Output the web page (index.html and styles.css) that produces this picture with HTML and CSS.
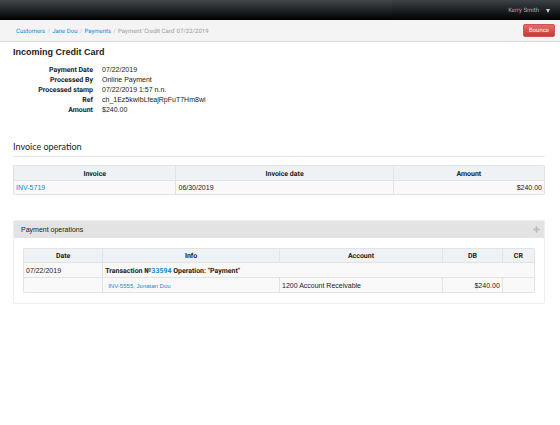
FILE: index.html
```html
<!DOCTYPE html>
<html lang="en">
<head>
  <meta charset="UTF-8">
  <title>Incoming Credit Card</title>
  <link rel="stylesheet" href="styles.css">
</head>
<body>

<header class="topbar">
  <button type="button" class="user-menu">Kerry Smith <span class="caret"></span></button>
</header>

<div class="subbar">
  <nav class="breadcrumb">
    <a href="#">Customers</a><span class="divider">/</span>
    <a href="#">Jane Dou</a><span class="divider">/</span>
    <a href="#">Payments</a><span class="divider">/</span>
    <span class="current">Payment 'Credit Card' 07/22/2019</span>
  </nav>
  <button type="button" class="btn-danger">Bounce</button>
</div>

<main class="content">
  <h1>Incoming Credit Card</h1>

  <dl class="details">
    <dt>Payment Date</dt><dd>07/22/2019</dd>
    <dt>Processed By</dt><dd>Online Payment</dd>
    <dt>Processed stamp</dt><dd>07/22/2019 1:57 n.n.</dd>
    <dt>Ref</dt><dd>ch_1Ez5kwIbLfeajRpFuT7Hm8wi</dd>
    <dt>Amount</dt><dd>$240.00</dd>
  </dl>

  <h2>Invoice operation</h2>

  <table class="table invoices">
    <colgroup>
      <col class="col-invoice"><col class="col-invoice-date"><col>
    </colgroup>
    <thead>
      <tr><th>Invoice</th><th>Invoice date</th><th>Amount</th></tr>
    </thead>
    <tbody>
      <tr><td><a href="#">INV-5719</a></td><td>06/30/2019</td><td class="money">$240.00</td></tr>
    </tbody>
  </table>

  <section class="panel">
    <div class="panel-head">
      <h3>Payment operations</h3>
      <button type="button" class="move" aria-label="Move">
        <svg width="7" height="7" viewBox="0 0 14 14">
          <path d="M7 0l3 3H8.500v2.500H11V4l3 3-3 3V8.500H8.500V11H10l-3 3-3-3h1.500V8.500H3V10L0 7l3-3v1.500h2.500V3H4z" fill="#bbb"/>
        </svg>
      </button>
    </div>
    <div class="panel-body">
      <table class="table operations">
        <colgroup>
          <col class="col-date"><col class="col-info"><col class="col-account"><col class="col-db"><col>
        </colgroup>
        <thead>
          <tr><th>Date</th><th>Info</th><th>Account</th><th>DB</th><th>CR</th></tr>
        </thead>
        <tbody>
          <tr>
            <td>07/22/2019</td>
            <td colspan="4" class="transaction">Transaction №<a href="#">33594</a> Operation: "Payment"</td>
          </tr>
          <tr>
            <td></td>
            <td class="entry"><a href="#">INV-5555, Jonatan Dou</a></td>
            <td>1200 Account Receivable</td>
            <td class="money">$240.00</td>
            <td></td>
          </tr>
        </tbody>
      </table>
    </div>
  </section>
</main>

</body>
</html>
```
FILE: styles.css
```css
* {
  box-sizing: border-box;
}

body {
  margin: 0;
  background: #fff;
  color: #222;
  font-family: "Liberation Sans", Arial, sans-serif;
  font-size: 7px;
  line-height: 10px;
}

a {
  color: #0c8ad6;
  text-decoration: none;
}

button {
  font-size: 6px;
  line-height: 8px;
  border: 0;
  cursor: pointer;
}

button,
.breadcrumb,
.details dt,
.table th,
.transaction {
  font-family: Roboto, sans-serif;
  text-rendering: geometricPrecision;
}

.topbar {
  display: flex;
  justify-content: flex-end;
  height: 20px;
  background: linear-gradient(#42484d, #202427 50%, #000);
}

.user-menu {
  display: flex;
  align-items: center;
  justify-content: flex-end;
  gap: 7px;
  width: 30%;
  padding: 1px 10px 0;
  background: rgba(0, 0, 0, 0.08);
  color: #aaa;
}

.caret {
  border: 2px solid transparent;
  border-top: 4px solid #ccc;
  border-bottom: 0;
}

.subbar {
  display: flex;
  align-items: center;
  justify-content: space-between;
  height: 22px;
  padding: 0 5px 0 16px;
  background: #f4f4f4;
  border-bottom: 1px solid #d8dade;
}

.breadcrumb {
  display: flex;
  padding-top: 2px;
  font-size: 6px;
}

.breadcrumb .divider {
  width: 7px;
  text-align: center;
  color: #bbb;
}

.breadcrumb .current {
  color: #999;
}

.btn-danger {
  width: 32px;
  height: 13px;
  padding: 0;
  border: 1px solid #cc5652;
  border-radius: 2px;
  background: linear-gradient(#e46a66, #c43c35);
  color: #fff;
}

.content {
  padding: 4px 15px 0 13px;
}

h1 {
  margin: 0 0 7px;
  font-size: 9px;
  line-height: 12px;
}

.details {
  display: grid;
  grid-template-columns: 80px 1fr;
  column-gap: 9px;
  margin: 0 0 25px;
}

.details dt {
  font-weight: bold;
  text-align: right;
}

.details dd {
  margin: 0;
}

h2 {
  margin: 0 0 8px;
  padding-bottom: 2px;
  border-bottom: 1px solid #e5e5e5;
  font-family: Lato, sans-serif;
  font-size: 9px;
  font-weight: normal;
  line-height: 14px;
}

.table {
  width: 100%;
  table-layout: fixed;
  border: 1px solid #e3e3e3;
  border-left: 0;
  border-radius: 2px;
  border-collapse: separate;
  border-spacing: 0;
}

.table th,
.table td {
  height: 14px;
  padding: 2px 2px 1px;
  border-left: 1px solid #e3e3e3;
}

.table th {
  background: #eef2f5;
}

.table td {
  border-top: 1px solid #e3e3e3;
  background: #f9f9f9;
}

.table .money {
  text-align: right;
}

.invoices {
  margin-bottom: 25px;
}

.col-invoice {
  width: 30.6%;
}

.col-invoice-date {
  width: 40.9%;
}

.panel {
  border: 1px solid #eee;
  border-radius: 2px;
}

.panel-head {
  display: flex;
  align-items: center;
  justify-content: space-between;
  height: 17px;
  padding: 0 4px 0 7px;
  background: #e3e3e3;
}

.panel-head h3 {
  margin: 0;
  font-size: 7px;
  font-weight: normal;
}

.move {
  display: flex;
  padding: 0;
  background: none;
}

.panel-body {
  padding: 10px 9px;
}

.operations th {
  height: 13px;
}

.operations td {
  height: 15px;
}

.col-date {
  width: 15.5%;
}

.col-info {
  width: 34.6%;
}

.col-account {
  width: 31.9%;
}

.col-db {
  width: 11.7%;
}

.operations .transaction {
  font-weight: bold;
}

.operations .entry {
  padding-left: 5px;
  font-size: 6px;
}
```
